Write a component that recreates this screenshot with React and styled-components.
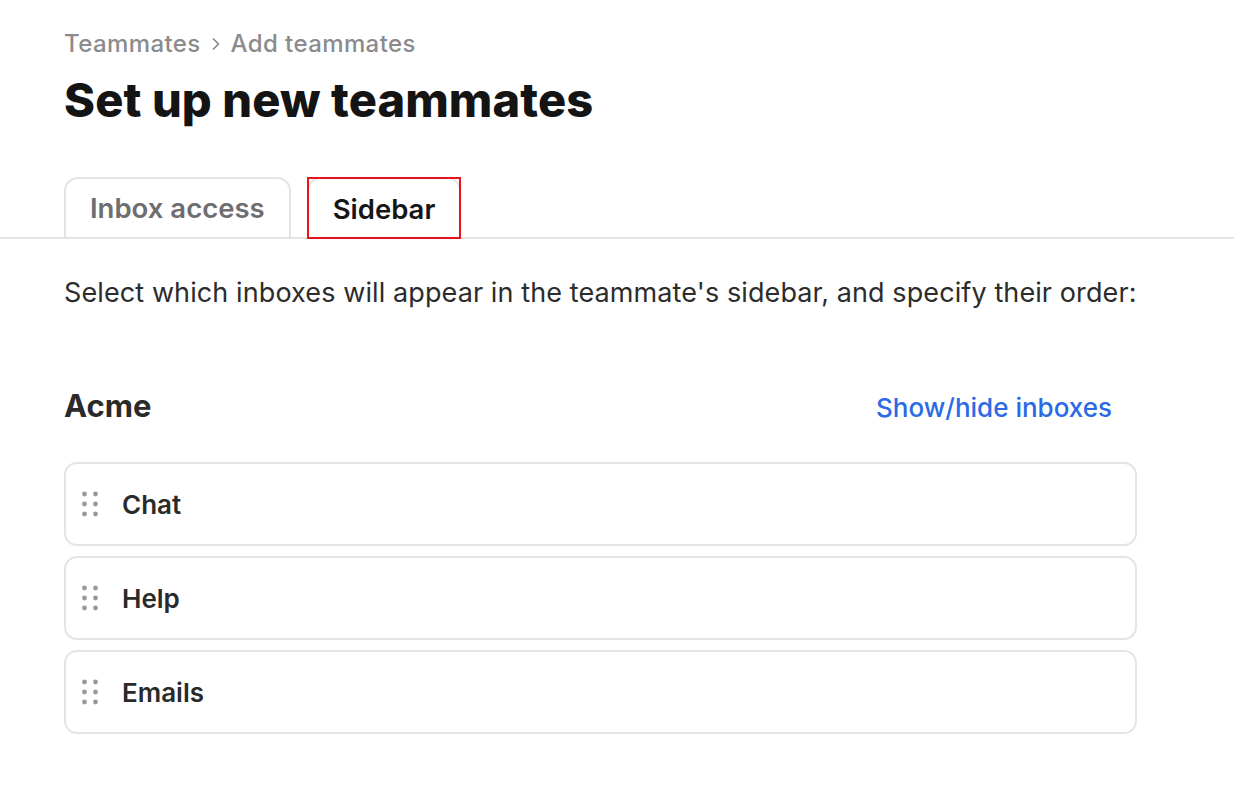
import React from "react";
import styled, { createGlobalStyle } from "styled-components";

const Global = createGlobalStyle`
  html, body { margin: 0; padding: 0; background: #fff; }
  body { font-family: Inter, "Noto Sans", sans-serif; color: #222; }
  * { box-sizing: border-box; }
`;

const Page = styled.div`
  width: 1234px;
  min-height: 794px;
  background: #fff;
`;

const Header = styled.div`
  padding: 29px 64px 0;
`;

const Breadcrumb = styled.div`
  display: flex;
  align-items: center;
  gap: 9px;
  font-size: 24px;
  font-weight: 500;
  letter-spacing: 0.4px;
  color: #8b8b8d;
  line-height: 30px;
`;

const Title = styled.h1`
  margin: 13px 0 0;
  font-size: 47px;
  font-weight: 800;
  letter-spacing: 0.1px;
  color: #141414;
  line-height: 56px;
`;

const TabBar = styled.div`
  display: flex;
  gap: 16px;
  padding: 0 64px;
  margin-top: 49px;
  border-bottom: 2px solid #e3e3e5;
`;

const Tab = styled.div`
  position: relative;
  padding: 0 24px;
  display: flex;
  align-items: center;
  border: 2px solid #e3e4e8;
  border-bottom: none;
  border-radius: 14px 14px 0 0;
  font-size: 27.5px;
  font-weight: 600;
  color: ${(p) => (p.$active ? "#161616" : "#6e6e70")};
  background: #fff;
  margin-bottom: ${(p) => (p.$active ? "-2px" : "0")};
  height: ${(p) => (p.$active ? "62px" : "60px")};
`;

const Highlight = styled.div`
  position: absolute;
  inset: -2px -2px 0 -2px;
  border: 2px solid #e8141a;
  pointer-events: none;
`;

const Content = styled.div`
  width: 1201px;
  padding: 36px 64px 0;
`;

const Description = styled.p`
  margin: 0;
  font-size: 27px;
  letter-spacing: 0.1px;
  line-height: 36px;
  color: #2c2c2c;
`;

const SectionHeader = styled.div`
  display: flex;
  align-items: center;
  justify-content: space-between;
  margin-top: 75px;
  padding-right: 25px;
  height: 40px;
`;

const SectionTitle = styled.h2`
  margin: 0;
  font-size: 31px;
  font-weight: 700;
  line-height: 40px;
  color: #2a2a2a;
`;

const LinkButton = styled.a`
  font-size: 26px;
  font-weight: 500;
  line-height: 40px;
  color: #2a6ae6;
  text-decoration: none;
  margin-top: 4px;
`;

const List = styled.div`
  display: flex;
  flex-direction: column;
  gap: 10px;
  margin-top: 36px;
`;

const Row = styled.div`
  height: 84px;
  display: flex;
  align-items: center;
  gap: 23px;
  padding: 0 15px;
  border: 2px solid #e3e4e8;
  border-radius: 13px;
`;

const RowLabel = styled.span`
  font-size: 26px;
  font-weight: 600;
  color: #2a2a2a;
`;

const Grip = () => (
  <svg width="18" height="30" viewBox="0 0 18 30">
    {[0, 1, 2].map((r) =>
      [0, 1].map((c) => (
        <circle key={`${r}-${c}`} cx={3.5 + c * 11} cy={5 + r * 10} r="2.4" fill="#98989c" />
      ))
    )}
  </svg>
);

const Chevron = () => (
  <svg width="12" height="16" viewBox="0 0 12 16">
    <path d="M3.5 3 L8.5 8 L3.5 13" fill="none" stroke="#8a8a8c" strokeWidth="1.7" strokeLinecap="round" strokeLinejoin="round" />
  </svg>
);

export default function App() {
  const inboxes = ["Chat", "Help", "Emails"];
  return (
    <Page>
      <Global />
      <Header>
        <Breadcrumb>
          <span>Teammates</span>
          <Chevron />
          <span>Add teammates</span>
        </Breadcrumb>
        <Title>Set up new teammates</Title>
      </Header>
      <TabBar>
        <Tab>Inbox access</Tab>
        <Tab $active>
          Sidebar
          <Highlight />
        </Tab>
      </TabBar>
      <Content>
        <Description>
          Select which inboxes will appear in the teammate's sidebar, and specify their order:
        </Description>
        <SectionHeader>
          <SectionTitle>Acme</SectionTitle>
          <LinkButton href="#">Show/hide inboxes</LinkButton>
        </SectionHeader>
        <List>
          {inboxes.map((name) => (
            <Row key={name}>
              <Grip />
              <RowLabel>{name}</RowLabel>
            </Row>
          ))}
        </List>
      </Content>
    </Page>
  );
}
